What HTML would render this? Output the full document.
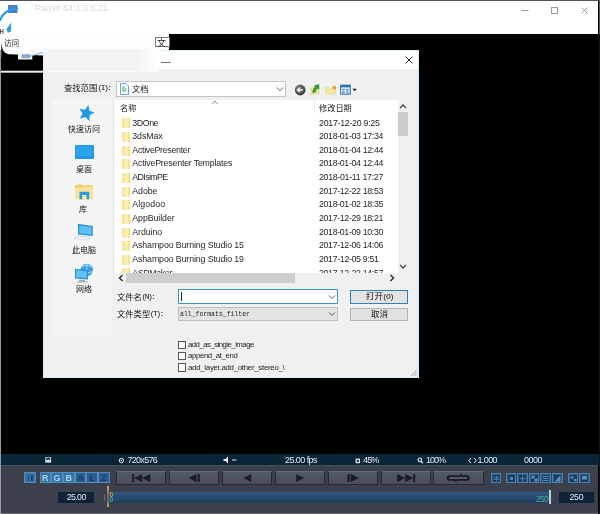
<!DOCTYPE html>
<html><head><meta charset="utf-8"><title>dialog</title>
<style>
html,body{margin:0;padding:0;background:#000;}
body{width:600px;height:514px;position:relative;overflow:hidden;font-family:"Liberation Sans",sans-serif;}
.a{position:absolute;display:block;}
.t{white-space:nowrap;font-family:"Liberation Sans",sans-serif;}
.cj{overflow:visible;font-family:"Liberation Sans","Noto Sans CJK SC",sans-serif;}
</style></head><body>
<div id="w" style="position:absolute;left:0;top:0;width:600px;height:514px;filter:blur(0.45px)">
<div class="a" style="left:0px;top:0px;width:600px;height:514px;background:#000"></div>
<div class="a" style="left:0px;top:0px;width:600px;height:1px;background:#555"></div>
<div class="a" style="left:0px;top:1px;width:598px;height:33px;background:#fff"></div>
<div class="a" style="left:0px;top:34px;width:1px;height:480px;background:#9a9a9a"></div>
<div class="a" style="left:0px;top:34px;width:169px;height:16px;background:#fdfdfd"></div>
<div class="a" style="left:1px;top:50px;width:43px;height:7px;background:#fbfbfb"></div>
<svg class="a" style="left:0;top:34px" width="46" height="40" viewBox="0 34 46 40"><path d="M1.200 41.500C1.800 49.500 3.500 53 9 54.300L43.500 55.600V70.700H1.200Z" fill="#000"/><rect x="18" y="53" width="14.300" height="6.500" fill="#f3f5f7"/><rect x="21.500" y="54.300" width="8.500" height="3.800" fill="#8aa9c6"/><path d="M30 56.200L43.500 52.300" stroke="#7fb0d8" stroke-width="1" fill="none"/><rect x="1" y="70.700" width="42.500" height="2" fill="#ececec"/></svg>
<div class="a" style="left:155px;top:36.7px;width:14.5px;height:10.3px;background:#fff;border:1px solid #777;box-sizing:border-box"></div>
<svg class="a" style="left:0;top:0" width="120" height="50" viewBox="0 0 120 50"><rect x="8" y="5" width="9.5" height="8" fill="#4f7fc4"/><path d="M18 8.5 C 9 8.5 2 13 0 21" fill="none" stroke="#2a9de6" stroke-width="2.2"/><path d="M11.200 22.500L6.300 29.500L8 32.800L10.800 31.500Z" fill="#2a9de6"/><path d="M0.5 29v5M3 29v5M0.5 31.500h2.500" stroke="#333" stroke-width="0.8" fill="none"/></svg>
<div class="a t " style="left:35px;top:4px;font-size:9px;line-height:9px;color:#dadada;">Player 64:1.0.6.21</div>
<svg class="a cj" style="left:4.00px;top:38.60px" width="15.20" height="7.60"><text x="0" y="6.69" font-size="7.6" fill="#222">访问</text></svg>
<svg class="a cj" style="left:157.00px;top:37.50px" width="9.00" height="9.00"><text x="0" y="7.92" font-size="9" fill="#222">文</text></svg>
<svg class="a" style="left:500px;top:0" width="100" height="34" viewBox="0 0 100 34" fill="none" stroke="#999" stroke-width="1"><path d="M21.500 10.500h7"/><rect x="51.500" y="7.500" width="6" height="6"/><path d="M81.500 7.500l6 6M87.500 7.500l-6 6"/></svg>
<div class="a" style="left:43px;top:49.5px;width:376px;height:328px;background:#f0f0f0;border:1.500px solid #d9f1fb;border-right:2px solid #d6eef9;box-sizing:border-box"></div>
<div class="a" style="left:44.5px;top:50.5px;width:373px;height:18px;background:#fff"></div>
<div class="a" style="left:43px;top:49px;width:116px;height:21.5px;background:linear-gradient(90deg,#f3f3f3 80%,#fff)"></div>
<div class="a" style="left:43px;top:70.5px;width:116px;height:1.5px;background:#fafafa"></div>
<svg class="a" style="left:403.600px;top:54.500px" width="10" height="10" viewBox="0 0 10 10" fill="none" stroke="#2a2a2a" stroke-width="1"><path d="M1.500 1.500l7 7M8.500 1.500l-7 7"/></svg>
<div class="a" style="left:161px;top:62px;width:10px;height:1px;background:#777"></div>
<svg class="a cj" style="left:64.00px;top:83.50px" width="33.20" height="8.30"><text x="0" y="7.30" font-size="8.3" fill="#111">查找范围</text></svg>
<div class="a t " style="left:97.5px;top:84px;font-size:8px;line-height:8px;color:#111;font-family:'Liberation Mono',monospace;letter-spacing:-1.6px">(I):</div>
<div class="a" style="left:115.5px;top:81px;width:170px;height:15.5px;background:#fff;border:1px solid #c4c4c4;box-sizing:border-box"></div>
<svg class="a" style="left:120px;top:83px" width="9" height="12" viewBox="0 0 9 12"><path d="M0.500 0.500h5.500l2.500 2.500v8.500h-8z" fill="#f4fbff" stroke="#6fa8c8" stroke-width="1"/><path d="M2 4h3M2 6h4.500M2 8h4.500" stroke="#4aa87a" stroke-width="1"/></svg>
<svg class="a cj" style="left:132.00px;top:84.50px" width="16.60" height="8.30"><text x="0" y="7.30" font-size="8.3" fill="#111">文档</text></svg>
<svg class="a" style="left:276px;top:86px" width="8" height="6" viewBox="0 0 8 6" fill="none" stroke="#555" stroke-width="1"><path d="M1 1.500l3 3l3-3"/></svg>
<svg class="a" style="left:294px;top:82px" width="66" height="16" viewBox="0 0 66 16"><defs><radialGradient id="bk" cx="0.4" cy="0.35" r="0.7"><stop offset="0" stop-color="#8a8a8a"/><stop offset="1" stop-color="#2e2e2e"/></radialGradient></defs><circle cx="6.200" cy="8" r="5.400" fill="url(#bk)"/><path d="M9 8h-5.500M5.800 5.800l-2.400 2.200l2.400 2.200" stroke="#efefef" stroke-width="1.300" fill="none"/><path d="M16 6.500l8-1.500l1.200 6.500l-8 1.500z" fill="#f1e396" stroke="#d8c870" stroke-width="0.400"/><path d="M18.500 10.500c0.500-3 1.500-4.500 3-5.500l-1.500-1l4.800-1.600l0.300 4.800l-1.400-1c-1.200 0.800-2 2-2.400 4z" fill="#2f9e35" stroke="#1f7a28" stroke-width="0.400"/><path d="M31.500 5.500h3.500l1 1.200h5.500v5.300l-9.500 0.300z" fill="#f4e79f" stroke="#dccb78" stroke-width="0.400"/><circle cx="40.300" cy="5.500" r="2" fill="#e3a24e"/><rect x="46.700" y="3.200" width="9.600" height="9" fill="#eef5fb" stroke="#2f72b0" stroke-width="1.100"/><rect x="46.700" y="3" width="9.600" height="2.400" fill="#2f72b0"/><path d="M48.300 6.800h2.400v1.800h-2.400zM52.300 6.800h2.400v1.800h-2.400zM48.300 9.600h2.400v1.600h-2.400zM52.300 9.600h2.400v1.600h-2.400z" fill="#4a8fd0"/><path d="M58.400 6.800h4.400l-2.200 2.400z" fill="#222"/></svg>
<div class="a" style="left:52px;top:99px;width:60px;height:236px;background:#f5f5f5"></div>
<svg class="a" style="left:76px;top:104px;transform:rotate(14deg)" width="19" height="17" viewBox="0 0 19 17"><path d="M10.500 0.500l2.300 5.400l5.600 0.500l-4.300 3.800l1.400 5.800l-5-3.200l-5 3.200l1.400-5.800l-4.300-3.800l5.600-0.500z" fill="#1d9bea"/></svg>
<svg class="a cj" style="left:68.00px;top:124.50px" width="32.00" height="8.00"><text x="0" y="7.04" font-size="8" fill="#111">快速访问</text></svg>
<div class="a" style="left:74.5px;top:145px;width:19px;height:13.5px;background:#1f97e8;border-radius:1px"></div>
<div class="a" style="left:76px;top:146px;width:16px;height:10px;background:#2aa3f0"></div>
<svg class="a cj" style="left:75.50px;top:165.00px" width="16.00" height="8.00"><text x="0" y="7.04" font-size="8" fill="#111">桌面</text></svg>
<svg class="a" style="left:74px;top:183px" width="20" height="18" viewBox="0 0 20 18"><path d="M1 2.500l5.500-1.500l1.500 1.500l10.800-0.500v14.300h-17.800z" fill="#f3d06a"/><path d="M1 4.500l17.800-0.500v12.300h-17.800z" fill="#f9e49a"/><path d="M5.500 16.300v-7.500h9.700v7.500h-2.700v-4.300h-4.300v4.300z" fill="#2a9be6"/></svg>
<svg class="a cj" style="left:78.50px;top:204.50px" width="8.00" height="8.00"><text x="0" y="7.04" font-size="8" fill="#111">库</text></svg>
<svg class="a" style="left:73px;top:222px" width="22" height="20" viewBox="0 0 22 20"><path d="M5 1.700l14.800 2.300v10l-14.800-1.500z" fill="#2a93de"/><path d="M6.300 3.300l12.300 1.900v7.400l-12.300-1.300z" fill="#5cc0f6"/><path d="M3.500 13.500l14 1.300l-2.500 4l-14-1.800z" fill="#d4dde4"/><path d="M4.200 14.600l11.500 1.100l-1.200 2l-11.500-1.400z" fill="#eef2f5"/></svg>
<svg class="a cj" style="left:71.50px;top:245.50px" width="24.00" height="8.00"><text x="0" y="7.04" font-size="8" fill="#111">此电脑</text></svg>
<svg class="a" style="left:74px;top:262px" width="20" height="21" viewBox="0 0 20 21"><circle cx="12.800" cy="8" r="6.200" fill="#3d9fe0"/><path d="M8 5q5-3.500 9.500 0M7 9.500q6 3 12 0M12.800 1.800v12" stroke="#a8dcf8" stroke-width="1" fill="none"/><path d="M1 6.700l13 1.600v9.300l-13-1.200z" fill="#2a8fd8"/><path d="M2.200 8l10.600 1.400v6.900l-10.600-1z" fill="#62c2f5"/><path d="M5 17.500l6 0.600v1.200l3 0.300v1h-11v-1l2-0.200z" fill="#9fb0bc"/></svg>
<svg class="a cj" style="left:76.00px;top:285.00px" width="16.00" height="8.00"><text x="0" y="7.04" font-size="8" fill="#111">网络</text></svg>
<div class="a" style="left:115px;top:99.5px;width:283px;height:173px;background:#fff"></div>
<svg class="a cj" style="left:120.00px;top:103.50px" width="16.40" height="8.20"><text x="0" y="7.22" font-size="8.2" fill="#222">名称</text></svg>
<svg class="a cj" style="left:318.50px;top:103.50px" width="32.80" height="8.20"><text x="0" y="7.22" font-size="8.2" fill="#222">修改日期</text></svg>
<div class="a" style="left:314px;top:100px;width:1px;height:13px;background:#ececec"></div>
<svg class="a" style="left:211px;top:100px" width="8" height="5" viewBox="0 0 8 5" fill="none" stroke="#888" stroke-width="1"><path d="M1 4l3-3l3 3"/></svg>
<div class="a" style="left:115px;top:99.500px;width:283px;height:173px;overflow:hidden">
<div class="a" style="left:6.800px;top:18.80px;width:7.800px;height:10px;background:linear-gradient(90deg,#f7df8e,#fcf0bc 60%,#f5d97c)"></div>
<div class="a t " style="left:17.3px;top:19px;font-size:8.8px;line-height:8.8px;color:#262626;letter-spacing:-0.415px;">3DOne</div>
<div class="a t " style="left:204px;top:19px;font-size:8.8px;line-height:8.8px;color:#262626;letter-spacing:-0.265px;">2017-12-20 9:25</div>
<div class="a" style="left:6.800px;top:32.45px;width:7.800px;height:10px;background:linear-gradient(90deg,#f7df8e,#fcf0bc 60%,#f5d97c)"></div>
<div class="a t " style="left:17.3px;top:32.65px;font-size:8.8px;line-height:8.8px;color:#262626;letter-spacing:-0.102px;">3dsMax</div>
<div class="a t " style="left:204px;top:32.65px;font-size:8.8px;line-height:8.8px;color:#262626;letter-spacing:-0.342px;">2018-01-03 17:34</div>
<div class="a" style="left:6.800px;top:46.10px;width:7.800px;height:10px;background:linear-gradient(90deg,#f7df8e,#fcf0bc 60%,#f5d97c)"></div>
<div class="a t " style="left:17.3px;top:46.3px;font-size:8.8px;line-height:8.8px;color:#262626;letter-spacing:-0.286px;">ActivePresenter</div>
<div class="a t " style="left:204px;top:46.3px;font-size:8.8px;line-height:8.8px;color:#262626;letter-spacing:-0.342px;">2018-01-04 12:44</div>
<div class="a" style="left:6.800px;top:59.75px;width:7.800px;height:10px;background:linear-gradient(90deg,#f7df8e,#fcf0bc 60%,#f5d97c)"></div>
<div class="a t " style="left:17.3px;top:59.95px;font-size:8.8px;line-height:8.8px;color:#262626;letter-spacing:-0.187px;">ActivePresenter Templates</div>
<div class="a t " style="left:204px;top:59.95px;font-size:8.8px;line-height:8.8px;color:#262626;letter-spacing:-0.342px;">2018-01-04 12:44</div>
<div class="a" style="left:6.800px;top:73.40px;width:7.800px;height:10px;background:linear-gradient(90deg,#f7df8e,#fcf0bc 60%,#f5d97c)"></div>
<div class="a t " style="left:17.3px;top:73.6px;font-size:8.8px;line-height:8.8px;color:#262626;letter-spacing:-0.612px;">ADIsimPE</div>
<div class="a t " style="left:204px;top:73.6px;font-size:8.8px;line-height:8.8px;color:#262626;letter-spacing:-0.301px;">2018-01-11 17:27</div>
<div class="a" style="left:6.800px;top:87.05px;width:7.800px;height:10px;background:linear-gradient(90deg,#f7df8e,#fcf0bc 60%,#f5d97c)"></div>
<div class="a t " style="left:17.3px;top:87.25px;font-size:8.8px;line-height:8.8px;color:#262626;letter-spacing:-0.087px;">Adobe</div>
<div class="a t " style="left:204px;top:87.25px;font-size:8.8px;line-height:8.8px;color:#262626;letter-spacing:-0.342px;">2017-12-22 18:53</div>
<div class="a" style="left:6.800px;top:100.70px;width:7.800px;height:10px;background:linear-gradient(90deg,#f7df8e,#fcf0bc 60%,#f5d97c)"></div>
<div class="a t " style="left:17.3px;top:100.9px;font-size:8.8px;line-height:8.8px;color:#262626;letter-spacing:0.100px;">Algodoo</div>
<div class="a t " style="left:204px;top:100.9px;font-size:8.8px;line-height:8.8px;color:#262626;letter-spacing:-0.342px;">2018-01-02 18:35</div>
<div class="a" style="left:6.800px;top:114.35px;width:7.800px;height:10px;background:linear-gradient(90deg,#f7df8e,#fcf0bc 60%,#f5d97c)"></div>
<div class="a t " style="left:17.3px;top:114.55px;font-size:8.8px;line-height:8.8px;color:#262626;letter-spacing:-0.075px;">AppBuilder</div>
<div class="a t " style="left:204px;top:114.55px;font-size:8.8px;line-height:8.8px;color:#262626;letter-spacing:-0.342px;">2017-12-29 18:21</div>
<div class="a" style="left:6.800px;top:128.00px;width:7.800px;height:10px;background:linear-gradient(90deg,#f7df8e,#fcf0bc 60%,#f5d97c)"></div>
<div class="a t " style="left:17.3px;top:128.2px;font-size:8.8px;line-height:8.8px;color:#262626;letter-spacing:-0.075px;">Arduino</div>
<div class="a t " style="left:204px;top:128.2px;font-size:8.8px;line-height:8.8px;color:#262626;letter-spacing:-0.342px;">2018-01-09 10:30</div>
<div class="a" style="left:6.800px;top:141.65px;width:7.800px;height:10px;background:linear-gradient(90deg,#f7df8e,#fcf0bc 60%,#f5d97c)"></div>
<div class="a t " style="left:17.3px;top:141.85px;font-size:8.8px;line-height:8.8px;color:#262626;letter-spacing:-0.113px;">Ashampoo Burning Studio 15</div>
<div class="a t " style="left:204px;top:141.85px;font-size:8.8px;line-height:8.8px;color:#262626;letter-spacing:-0.342px;">2017-12-06 14:06</div>
<div class="a" style="left:6.800px;top:155.30px;width:7.800px;height:10px;background:linear-gradient(90deg,#f7df8e,#fcf0bc 60%,#f5d97c)"></div>
<div class="a t " style="left:17.3px;top:155.5px;font-size:8.8px;line-height:8.8px;color:#262626;letter-spacing:-0.113px;">Ashampoo Burning Studio 19</div>
<div class="a t " style="left:204px;top:155.5px;font-size:8.8px;line-height:8.8px;color:#262626;letter-spacing:-0.332px;">2017-12-05 9:51</div>
<div class="a" style="left:6.800px;top:168.95px;width:7.800px;height:10px;background:linear-gradient(90deg,#f7df8e,#fcf0bc 60%,#f5d97c)"></div>
<div class="a t " style="left:17.3px;top:169.15px;font-size:8.8px;line-height:8.8px;color:#262626;letter-spacing:-0.256px;">ASPMaker</div>
<div class="a t " style="left:204px;top:169.15px;font-size:8.8px;line-height:8.8px;color:#262626;letter-spacing:-0.342px;">2017-12-22 14:57</div>
</div>
<div class="a" style="left:398px;top:111.5px;width:9.7px;height:24.5px;background:#cdcdcd"></div>
<svg class="a" style="left:399px;top:103px" width="8" height="6" viewBox="0 0 8 6" fill="none" stroke="#444" stroke-width="1.300"><path d="M1 5l3-3l3 3"/></svg>
<svg class="a" style="left:399px;top:264px" width="8" height="6" viewBox="0 0 8 6" fill="none" stroke="#444" stroke-width="1.300"><path d="M1 1l3 3l3-3"/></svg>
<div class="a" style="left:126px;top:273px;width:169px;height:9.5px;background:#cdcdcd"></div>
<svg class="a" style="left:118px;top:274px" width="6" height="8" viewBox="0 0 6 8" fill="none" stroke="#222" stroke-width="1.300"><path d="M4.500 1l-3 3l3 3"/></svg>
<svg class="a" style="left:389px;top:274px" width="6" height="8" viewBox="0 0 6 8" fill="none" stroke="#222" stroke-width="1.300"><path d="M1.500 1l3 3l-3 3"/></svg>
<svg class="a cj" style="left:116.50px;top:292.50px" width="24.90" height="8.30"><text x="0" y="7.30" font-size="8.3" fill="#111">文件名</text></svg>
<div class="a t " style="left:141.5px;top:293px;font-size:8px;line-height:8px;color:#111;font-family:'Liberation Mono',monospace;letter-spacing:-1.600px">(N):</div>
<div class="a" style="left:177.5px;top:289px;width:160px;height:14.5px;background:#fff;border:1px solid #3a96b8;box-sizing:border-box"></div>
<div class="a" style="left:181px;top:291.5px;width:1px;height:9px;background:#222"></div>
<svg class="a" style="left:328px;top:293.500px" width="8" height="6" viewBox="0 0 8 6" fill="none" stroke="#555" stroke-width="1"><path d="M1 1.500l3 3l3-3"/></svg>
<svg class="a cj" style="left:116.50px;top:309.50px" width="33.20" height="8.30"><text x="0" y="7.30" font-size="8.3" fill="#111">文件类型</text></svg>
<div class="a t " style="left:149.8px;top:310px;font-size:8px;line-height:8px;color:#111;font-family:'Liberation Mono',monospace;letter-spacing:-1.600px">(T):</div>
<div class="a" style="left:177.5px;top:307px;width:160px;height:14px;background:#e3e3e3;border:1px solid #c0c0c0;box-sizing:border-box"></div>
<div class="a t " style="left:180px;top:309.8px;font-size:8px;line-height:8px;color:#222;font-family:'Liberation Mono',monospace;transform-origin:0 0;transform:scaleX(0.8100);">all_formats_filter</div>
<svg class="a" style="left:328px;top:311px" width="8" height="6" viewBox="0 0 8 6" fill="none" stroke="#555" stroke-width="1"><path d="M1 1.500l3 3l3-3"/></svg>
<div class="a" style="left:350px;top:290px;width:57.5px;height:13.5px;background:#e3e3e3;border:1.500px solid #2f80c4;box-sizing:border-box"></div>
<svg class="a cj" style="left:365.50px;top:292.30px" width="17.00" height="8.50"><text x="0" y="7.48" font-size="8.5" fill="#111">打开</text></svg>
<div class="a t " style="left:382.5px;top:292.8px;font-size:8px;line-height:8px;color:#111;font-family:'Liberation Mono',monospace;letter-spacing:-1.300px">(O)</div>
<div class="a" style="left:350px;top:307.5px;width:57.5px;height:13px;background:#e1e1e1;border:1px solid #b4b4b4;box-sizing:border-box"></div>
<svg class="a cj" style="left:371.00px;top:309.80px" width="17.00" height="8.50"><text x="0" y="7.48" font-size="8.5" fill="#111">取消</text></svg>
<div class="a" style="left:177.5px;top:340.5px;width:8.7px;height:8.5px;background:#fff;border:1px solid #555;box-sizing:border-box"></div>
<div class="a t " style="left:188px;top:341px;font-size:7.8px;line-height:7.8px;color:#222;letter-spacing:-0.533px;">add_as_single_image</div>
<div class="a" style="left:177.5px;top:351.75px;width:8.7px;height:8.5px;background:#fff;border:1px solid #555;box-sizing:border-box"></div>
<div class="a t " style="left:188px;top:352.25px;font-size:7.8px;line-height:7.8px;color:#222;letter-spacing:-0.362px;">append_at_end</div>
<div class="a" style="left:177.5px;top:363px;width:8.7px;height:8.5px;background:#fff;border:1px solid #555;box-sizing:border-box"></div>
<div class="a t " style="left:188px;top:363.5px;font-size:7.8px;line-height:7.8px;color:#222;letter-spacing:-0.254px;">add_layer.add_other_stereo_\</div>
<svg class="a" style="left:410px;top:369px" width="8" height="8" viewBox="0 0 8 8" fill="#b8b8b8"><rect x="5" y="1" width="1.500" height="1.500"/><rect x="3" y="3" width="1.500" height="1.500"/><rect x="5" y="3" width="1.500" height="1.500"/><rect x="1" y="5" width="1.500" height="1.500"/><rect x="3" y="5" width="1.500" height="1.500"/><rect x="5" y="5" width="1.500" height="1.500"/></svg>
<div class="a" style="left:1px;top:454px;width:597.5px;height:11px;background:#0b2538"></div>
<div class="a" style="left:1px;top:465px;width:597px;height:47.5px;background:#3b404c"></div>
<div class="a" style="left:1px;top:465px;width:597px;height:1px;background:#4a5261"></div>
<div class="a" style="left:1px;top:512.5px;width:597px;height:1.5px;background:#6a6f78"></div>
<div class="a" style="left:598.6px;top:1px;width:1.4px;height:33px;background:#555"></div>
<div class="a" style="left:598.5px;top:34px;width:1.5px;height:480px;background:#121212"></div>
<svg class="a" style="left:45px;top:456.500px" width="7" height="6" viewBox="0 0 7 6"><rect x="0.300" y="0.200" width="5.800" height="5.400" fill="#dfe7ee"/><rect x="1.300" y="0.800" width="3.800" height="2.300" fill="#0b2237"/><path d="M2.300 3.100l0.900-1.300l0.900 1.300z" fill="#dfe7ee"/></svg>
<svg class="a" style="left:118px;top:456.500px" width="7" height="7" viewBox="0 0 7 7"><circle cx="3.400" cy="3.500" r="2.200" fill="none" stroke="#e4ebf2" stroke-width="1"/><circle cx="3.400" cy="3.500" r="0.800" fill="#e4ebf2"/></svg>
<div class="a t " style="left:127.5px;top:455.9px;font-size:9px;line-height:9px;color:#e4ebf2;letter-spacing:-0.721px;">720x576</div>
<svg class="a" style="left:223px;top:456px" width="16" height="8" viewBox="0 0 16 8"><path d="M0.500 3h2l2.500-2.500v7l-2.500-2.500h-2z" fill="#e8eef4"/><rect x="9" y="3.500" width="4.500" height="1" fill="#e8eef4"/></svg>
<div class="a t " style="left:285px;top:455.9px;font-size:9px;line-height:9px;color:#e4ebf2;letter-spacing:-0.559px;">25.00 fps</div>
<svg class="a" style="left:354.500px;top:457.500px" width="6" height="6" viewBox="0 0 6 6"><rect x="1.200" y="1.200" width="3.200" height="3.400" fill="none" stroke="#e4ebf2" stroke-width="1.200"/></svg>
<div class="a t " style="left:363px;top:455.9px;font-size:9px;line-height:9px;color:#e4ebf2;letter-spacing:-0.872px;">45%</div>
<svg class="a" style="left:417px;top:456.500px" width="7" height="7" viewBox="0 0 7 7"><circle cx="2.800" cy="2.800" r="1.800" fill="none" stroke="#e4ebf2" stroke-width="1.100"/><path d="M4.100 4.200l1.800 2" stroke="#e4ebf2" stroke-width="1.300"/></svg>
<div class="a t " style="left:426px;top:455.9px;font-size:9px;line-height:9px;color:#e4ebf2;letter-spacing:-1.008px;">100%</div>
<svg class="a" style="left:467.500px;top:456.500px" width="9" height="7" viewBox="0 0 9 7" fill="none" stroke="#e8eef4" stroke-width="1"><path d="M3 1l-2.300 2.500l2.300 2.500M6 1l2.300 2.500l-2.300 2.500"/></svg>
<div class="a t " style="left:477.4px;top:455.9px;font-size:9px;line-height:9px;color:#e4ebf2;letter-spacing:-0.586px;">1.000</div>
<div class="a t " style="left:524px;top:455.9px;font-size:9px;line-height:9px;color:#e4ebf2;letter-spacing:-0.508px;">0000</div>
<div class="a" style="left:24px;top:472.3px;width:11.5px;height:11.2px;background:#3673a8;border:1px solid #4f8cc0;box-sizing:border-box"></div>
<div class="a" style="left:27.7px;top:474.8px;width:1.8px;height:6.4px;background:#1f4468"></div>
<div class="a" style="left:30.8px;top:474.8px;width:1.8px;height:6.4px;background:#1f4468"></div>
<div class="a" style="left:39.5px;top:472.3px;width:11.7px;height:11.2px;background:#3673a8;border:1px solid #4f8cc0;box-sizing:border-box"></div>
<div class="a t " style="left:39.5px;top:473.6px;font-size:9px;line-height:9px;color:#a9d3f2;width:11.7px;text-align:center;font-weight:bold">R</div>
<div class="a" style="left:51.2px;top:472.3px;width:11.7px;height:11.2px;background:#3673a8;border:1px solid #4f8cc0;box-sizing:border-box"></div>
<div class="a t " style="left:51.2px;top:473.6px;font-size:9px;line-height:9px;color:#a9d3f2;width:11.7px;text-align:center;font-weight:bold">G</div>
<div class="a" style="left:62.9px;top:472.3px;width:11.7px;height:11.2px;background:#3673a8;border:1px solid #4f8cc0;box-sizing:border-box"></div>
<div class="a t " style="left:62.9px;top:473.6px;font-size:9px;line-height:9px;color:#a9d3f2;width:11.7px;text-align:center;font-weight:bold">B</div>
<div class="a" style="left:74.6px;top:472.3px;width:11.7px;height:11.2px;background:#2c5d8c;border:1px solid #4f8cc0;box-sizing:border-box"></div>
<div class="a t " style="left:74.6px;top:473.6px;font-size:9px;line-height:9px;color:#1c3d60;width:11.7px;text-align:center;font-weight:bold">A</div>
<div class="a" style="left:86.3px;top:472.3px;width:11.7px;height:11.2px;background:#2c5d8c;border:1px solid #4f8cc0;box-sizing:border-box"></div>
<div class="a t " style="left:86.3px;top:473.6px;font-size:9px;line-height:9px;color:#1c3d60;width:11.7px;text-align:center;font-weight:bold">L</div>
<div class="a" style="left:98px;top:472.3px;width:11.7px;height:11.2px;background:#2c5d8c;border:1px solid #4f8cc0;box-sizing:border-box"></div>
<div class="a t " style="left:98px;top:473.6px;font-size:9px;line-height:9px;color:#1c3d60;width:11.7px;text-align:center;font-weight:bold">Z</div>
<div class="a" style="left:116px;top:471px;width:50.3px;height:14px;background:linear-gradient(#535968,#494e5c);border:1px solid #262a33;border-top-color:#646a79;box-sizing:border-box;border-radius:1px"></div>
<svg class="a" style="left:116px;top:471px" width="50.300" height="14" viewBox="0 0 50.300 14" fill="#181c25"><path d="M16.200 3v8h2v-8zM26.200 3l-8 4l8 4zM34.200 3l-8 4l8 4z"/></svg>
<div class="a" style="left:168.9px;top:471px;width:50.3px;height:14px;background:linear-gradient(#535968,#494e5c);border:1px solid #262a33;border-top-color:#646a79;box-sizing:border-box;border-radius:1px"></div>
<svg class="a" style="left:168.9px;top:471px" width="50.300" height="14" viewBox="0 0 50.300 14" fill="#181c25"><path d="M30.700 3v8h-2.200v-8zM27.500 3l-8 4l8 4z"/></svg>
<div class="a" style="left:221.8px;top:471px;width:50.3px;height:14px;background:linear-gradient(#535968,#494e5c);border:1px solid #262a33;border-top-color:#646a79;box-sizing:border-box;border-radius:1px"></div>
<svg class="a" style="left:221.8px;top:471px" width="50.300" height="14" viewBox="0 0 50.300 14" fill="#181c25"><path d="M29.200 3l-8 4l8 4z"/></svg>
<div class="a" style="left:274.7px;top:471px;width:50.3px;height:14px;background:linear-gradient(#535968,#494e5c);border:1px solid #262a33;border-top-color:#646a79;box-sizing:border-box;border-radius:1px"></div>
<svg class="a" style="left:274.7px;top:471px" width="50.300" height="14" viewBox="0 0 50.300 14" fill="#181c25"><path d="M21.200 3l8 4l-8 4z"/></svg>
<div class="a" style="left:327.6px;top:471px;width:50.3px;height:14px;background:linear-gradient(#535968,#494e5c);border:1px solid #262a33;border-top-color:#646a79;box-sizing:border-box;border-radius:1px"></div>
<svg class="a" style="left:327.6px;top:471px" width="50.300" height="14" viewBox="0 0 50.300 14" fill="#181c25"><path d="M19.500 3v8h2.200v-8zM22.700 3l8 4l-8 4z"/></svg>
<div class="a" style="left:380.5px;top:471px;width:50.3px;height:14px;background:linear-gradient(#535968,#494e5c);border:1px solid #262a33;border-top-color:#646a79;box-sizing:border-box;border-radius:1px"></div>
<svg class="a" style="left:380.5px;top:471px" width="50.300" height="14" viewBox="0 0 50.300 14" fill="#181c25"><path d="M34.200 3v8h-2v-8zM24.200 3l8 4l-8 4zM16.200 3l8 4l-8 4z"/></svg>
<div class="a" style="left:433.4px;top:471px;width:50.3px;height:14px;background:linear-gradient(#535968,#494e5c);border:1px solid #262a33;border-top-color:#646a79;box-sizing:border-box;border-radius:1px"></div>
<svg class="a" style="left:433.4px;top:471px" width="50.300" height="14" viewBox="0 0 50.300 14" fill="#181c25"><rect x="13.700" y="4.200" width="23" height="5.600" rx="2.800"/><rect x="16" y="6.200" width="18.400" height="1.600" rx="0.800" fill="#6a707e"/><path d="M27 2.600l3.200 1.700h-3.200zM23.500 11.400l-3.200-1.700h3.200z"/></svg>
<div class="a" style="left:490.5px;top:472.6px;width:10.9px;height:10.9px;background:#2b5a87;border:1px solid #4a82b4;box-sizing:border-box"></div>
<svg class="a" style="left:490.5px;top:472.600px" width="11" height="11" viewBox="0 0 11 11" fill="none"><rect x="2" y="2" width="7" height="7" fill="#1b3b5e"/><path d="M2.500 4.500h6M2.500 6.500h6M5.500 2.500v6" stroke="#4f86b8" stroke-width="0.800"/></svg>
<div class="a" style="left:505.5px;top:472.6px;width:10.9px;height:10.9px;background:#2b5a87;border:1px solid #4a82b4;box-sizing:border-box"></div>
<svg class="a" style="left:505.5px;top:472.600px" width="11" height="11" viewBox="0 0 11 11" fill="none"><rect x="2" y="2" width="7" height="7" fill="#1b3b5e"/><rect x="4" y="4" width="3" height="3" fill="#4f86b8"/></svg>
<div class="a" style="left:517.05px;top:472.6px;width:10.9px;height:10.9px;background:#2b5a87;border:1px solid #4a82b4;box-sizing:border-box"></div>
<svg class="a" style="left:517.05px;top:472.600px" width="11" height="11" viewBox="0 0 11 11" fill="none"><rect x="2" y="2" width="7" height="7" fill="#1b3b5e"/><path d="M5.500 2.500v6.500M2.500 5.700h6" stroke="#4f86b8" stroke-width="1"/></svg>
<div class="a" style="left:528.6px;top:472.6px;width:10.9px;height:10.9px;background:#2b5a87;border:1px solid #4a82b4;box-sizing:border-box"></div>
<svg class="a" style="left:528.6px;top:472.600px" width="11" height="11" viewBox="0 0 11 11" fill="none"><rect x="2" y="2" width="7" height="7" fill="#1b3b5e"/><rect x="2.500" y="2.500" width="3" height="3" fill="#5a92c4"/><rect x="5.500" y="5.500" width="3" height="3" fill="#5a92c4"/></svg>
<div class="a" style="left:540.15px;top:472.6px;width:10.9px;height:10.9px;background:#2b5a87;border:1px solid #4a82b4;box-sizing:border-box"></div>
<svg class="a" style="left:540.15px;top:472.600px" width="11" height="11" viewBox="0 0 11 11" fill="none"><rect x="2" y="2" width="7" height="7" fill="#1b3b5e"/><path d="M2.500 3.500h6M2.500 5.500h6M2.500 7.500h6" stroke="#5a92c4" stroke-width="0.900"/></svg>
<div class="a" style="left:551.7px;top:472.6px;width:10.9px;height:10.9px;background:#2b5a87;border:1px solid #4a82b4;box-sizing:border-box"></div>
<svg class="a" style="left:551.7px;top:472.600px" width="11" height="11" viewBox="0 0 11 11" fill="none"><rect x="2" y="2" width="7" height="7" fill="#1b3b5e"/><path d="M8.500 2.500v6h-6z" fill="#5a92c4"/></svg>
<div class="a" style="left:567.5px;top:472.6px;width:10.9px;height:10.9px;background:#2b5a87;border:1px solid #4a82b4;box-sizing:border-box"></div>
<svg class="a" style="left:567.5px;top:472.600px" width="11" height="11" viewBox="0 0 11 11" fill="none"><rect x="2" y="2" width="7" height="7" fill="#1b3b5e"/><path d="M2.500 3.500h3v2h-3zM6 6h2.500v2h-2.500z" fill="#5a92c4"/></svg>
<div class="a" style="left:579.3px;top:472.6px;width:10.9px;height:10.9px;background:#2b5a87;border:1px solid #4a82b4;box-sizing:border-box"></div>
<svg class="a" style="left:579.3px;top:472.600px" width="11" height="11" viewBox="0 0 11 11" fill="none"><rect x="2" y="2" width="7" height="7" fill="#1b3b5e"/><rect x="3" y="3" width="5" height="3.500" fill="#5a92c4"/></svg>
<div class="a" style="left:58px;top:491.5px;width:36px;height:11px;background:#0e2338"></div>
<div class="a t " style="left:66.7px;top:492.8px;font-size:8.7px;line-height:8.7px;color:#e4ebf2;letter-spacing:-0.550px;">25.00</div>
<div class="a" style="left:559px;top:491.5px;width:35px;height:11px;background:#0e2338"></div>
<div class="a t " style="left:569.5px;top:492.8px;font-size:8.7px;line-height:8.7px;color:#e4ebf2;letter-spacing:-0.267px;">250</div>
<div class="a" style="left:108px;top:491.7px;width:442px;height:11.6px;background:linear-gradient(#2d5883,#274b71 50%,#203d5b)"></div>
<div class="a" style="left:106.8px;top:486px;width:1.8px;height:21.3px;background:linear-gradient(#c9a27e,#b98850 25%,#7a6a4a 45%,#7a6a4a 70%,#c9a27e)"></div>
<div class="a t " style="left:109.6px;top:491.6px;font-size:6.5px;line-height:6.5px;color:#b8a040;font-weight:bold">0</div>
<div class="a t " style="left:109.6px;top:496.9px;font-size:6.5px;line-height:6.5px;color:#3fb0b8;font-weight:bold">0</div>
<div class="a" style="left:104px;top:494px;width:1px;height:7px;background:#5a6a7a"></div>
<div class="a" style="left:549.2px;top:489.8px;width:1.6px;height:14.4px;background:#b4d2e2"></div>
<div class="a t " style="left:536px;top:495.3px;font-size:8.3px;line-height:8.3px;color:#3fae9e;letter-spacing:-0.615px;">250</div>
</div>
</body></html>
